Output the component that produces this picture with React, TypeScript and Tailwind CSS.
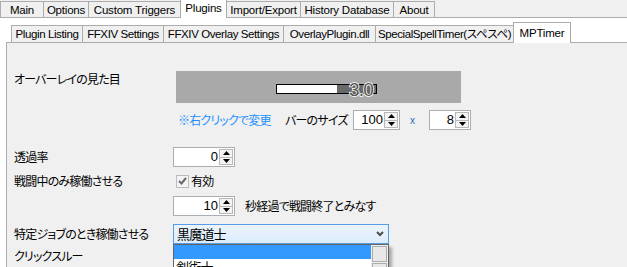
import React from "react";

const jp = "font-['Noto_Sans_CJK_JP',sans-serif] [font-feature-settings:'palt'] tracking-[-0.8px]";

const mainTabs = [
  { label: "Main", w: "w-[44px]" },
  { label: "Options", w: "w-[46px]" },
  { label: "Custom Triggers", w: "w-[93px]" },
  { label: "Plugins", w: "w-[47px]", active: true },
  { label: "Import/Export", w: "w-[75px]" },
  { label: "History Database", w: "w-[94px]" },
  { label: "About", w: "w-[42px]" },
];

const subTabs = [
  { label: "Plugin Listing", w: "w-[72px]" },
  { label: "FFXIV Settings", w: "w-[82px]" },
  { label: "FFXIV Overlay Settings", w: "w-[121px]" },
  { label: "OverlayPlugin.dll", w: "w-[93px]" },
  { label: "SpecialSpellTimer(スペスペ)", w: "w-[139px]" },
  { label: "MPTimer", w: "w-[58px]", active: true },
];

function Arrow({ up }: { up?: boolean }) {
  return (
    <svg width="7" height="4" viewBox="0 0 7 4">
      <path d={up ? "M0 4 L3.5 0 L7 4 Z" : "M0 0 L7 0 L3.5 4 Z"} fill="#000" />
    </svg>
  );
}

function Spin({ value, w }: { value: string; w: string }) {
  return (
    <div className={`flex h-[20px] border border-[#abadb3] bg-white tracking-normal ${w}`}>
      <span className="flex-1 pr-[1px] text-right font-['Liberation_Sans',sans-serif] text-[13px] leading-[18px]">{value}</span>
      <div className="my-[1px] mr-[1px] flex w-[14px] flex-col">
        <div className="flex flex-1 items-center justify-center border border-[#b8b8b8] bg-[#f3f3f3]">
          <Arrow up />
        </div>
        <div className="-mt-px flex flex-1 items-center justify-center border border-[#b8b8b8] bg-[#f3f3f3]">
          <Arrow />
        </div>
      </div>
    </div>
  );
}

export default function App() {
  return (
    <div className="flex h-[267px] w-[627px] flex-col overflow-hidden bg-[#f0f0f0] font-['Liberation_Sans','Noto_Sans_CJK_JP',sans-serif] text-[12px] text-black">
      {/* main tabs */}
      <div className="flex h-[18px] shrink-0 items-end border-b border-[#acacac] text-[11.5px] tracking-[-0.2px] whitespace-nowrap">
        {mainTabs.map((t, i) =>
          t.active ? (
            <div
              key={t.label}
              className={`relative z-10 -mb-px -ml-px flex h-[19px] justify-center border border-b-0 border-[#acacac] bg-white pt-[1px] leading-[14px] ${t.w}`}
            >
              {t.label}
            </div>
          ) : (
            <div
              key={t.label}
              className={`flex h-[16px] items-center justify-center border border-b-0 border-[#acacac] bg-[#f0f0f0] leading-[14px] ${i > 0 ? "-ml-px" : ""} ${t.w}`}
            >
              {t.label}
            </div>
          )
        )}
      </div>

      {/* outer page */}
      <div className="flex flex-1 flex-col bg-white pt-[4px]">
        <div className="ml-[6px] flex h-[21px] shrink-0 items-end border-b border-[#acacac] pl-[5px] text-[11.5px] tracking-[-0.2px] whitespace-nowrap [font-feature-settings:'palt']">
          {subTabs.map((t, i) =>
            t.active ? (
              <div
                key={t.label}
                className={`relative z-10 -mb-px -ml-px flex h-[21px] justify-center border border-b-0 border-[#acacac] bg-white pt-[3px] leading-[14px] ${t.w}`}
              >
                {t.label}
              </div>
            ) : (
              <div
                key={t.label}
                className={`flex h-[17px] items-center justify-center overflow-hidden border border-b-0 border-[#acacac] bg-[#f0f0f0] leading-[14px] ${i > 0 ? "-ml-px" : ""} ${t.w}`}
              >
                <span className="tracking-[-0.4px]">{t.label}</span>
              </div>
            )
          )}
        </div>

        {/* MPTimer page */}
        <div className={`ml-[6px] flex flex-1 flex-col border-l border-[#acacac] bg-[#f0f0f0] pl-[7px] pt-[28px] ${jp}`}>
          <div className="flex">
            <div className="w-[159px] leading-[16px]">オーバーレイの見た目</div>
            <div className="ml-[3px] h-[32px] w-[285px] bg-[#a9a9a9]">
              <svg width="285" height="32" viewBox="0 0 285 32">
                <rect x="100.5" y="13.5" width="100" height="9" fill="#fff" stroke="#000" />
                <rect x="161" y="14" width="39" height="8" fill="#696969" />
                <text
                  x="197"
                  y="25"
                  textAnchor="end"
                  fontSize="19"
                  fontFamily="Liberation Sans, sans-serif"
                  fill="#555"
                  stroke="#fff"
                  strokeWidth="1.6"
                  paintOrder="stroke"
                >
                  3.0
                </text>
              </svg>
            </div>
          </div>

          <div className="mt-[7px] flex h-[20px] items-center">
            <div className="w-[159px]" />
            <span className="ml-[5px] w-[107px] text-[#1e90ff]">※右クリックで変更</span>
            <span className="w-[68px]">バーのサイズ</span>
            <Spin value="100" w="w-[47px]" />
            <span className="w-[29px] pl-[10px] font-['Liberation_Sans',sans-serif] text-[10px] text-[#2a6bc4]">x</span>
            <Spin value="8" w="w-[42px]" />
          </div>

          <div className="mt-[17px] flex h-[20px] items-center">
            <div className="w-[159px]">透過率</div>
            <Spin value="0" w="w-[62px]" />
          </div>

          <div className="mt-[6px] flex h-[16px] items-center">
            <div className="w-[159px]">戦闘中のみ稼働させる</div>
            <div className="ml-[3px] flex h-[13px] w-[13px] items-center justify-center border border-[#bcbcbc] bg-[#f4f4f4]">
              <svg width="9" height="8" viewBox="0 0 9 8">
                <path d="M1 4 L3.5 6.5 L8 1" fill="none" stroke="#6a6a6a" strokeWidth="2" />
              </svg>
            </div>
            <span className="ml-[2px]">有効</span>
          </div>

          <div className="mt-[7px] flex h-[20px] items-center">
            <div className="w-[159px]" />
            <Spin value="10" w="w-[62px]" />
            <span className="ml-[10px]">秒経過で戦闘終了とみなす</span>
          </div>

          <div className="mt-[8px] flex h-[20px] items-center">
            <div className="w-[159px]">特定ジョブのとき稼働させる</div>
            <div className="relative z-10 h-[20px] w-[216px]">
              <div className="flex h-[20px] items-center justify-between border border-[#569de5] bg-linear-to-b from-[#ecf4fc] to-[#dcecfc] pl-[3px] pr-[4px]">
                <span className="text-[13px]">黒魔道士</span>
                <svg width="8" height="6" viewBox="0 0 8 6">
                  <path d="M1 1 L4 4 L7 1" fill="none" stroke="#4d4d4d" strokeWidth="2" />
                </svg>
              </div>
              <div className="absolute left-0 top-[20px] flex h-[60px] w-[216px] border border-[#646464] bg-white shadow-[3px_3px_3px_rgba(0,0,0,0.3)]">
                <div className="flex flex-1 flex-col">
                  <div className="h-[14px] bg-[#3399ff]" />
                  <div className="pl-[2px] text-[13px] leading-[16px]">剣術士</div>
                </div>
                <div className="flex w-[17px] flex-col items-center bg-[#f0f0f0] pt-[1px]">
                  <div className="h-[16px] w-[15px] border border-[#acacac] bg-[#e8e8e8]" />
                  <div className="mt-[1px] h-[16px] w-[15px] border border-[#acacac] bg-[#e8e8e8]" />
                </div>
              </div>
            </div>
          </div>

          <div className="mt-[4px] leading-[16px]">クリックスルー</div>
        </div>
      </div>
    </div>
  );
}
